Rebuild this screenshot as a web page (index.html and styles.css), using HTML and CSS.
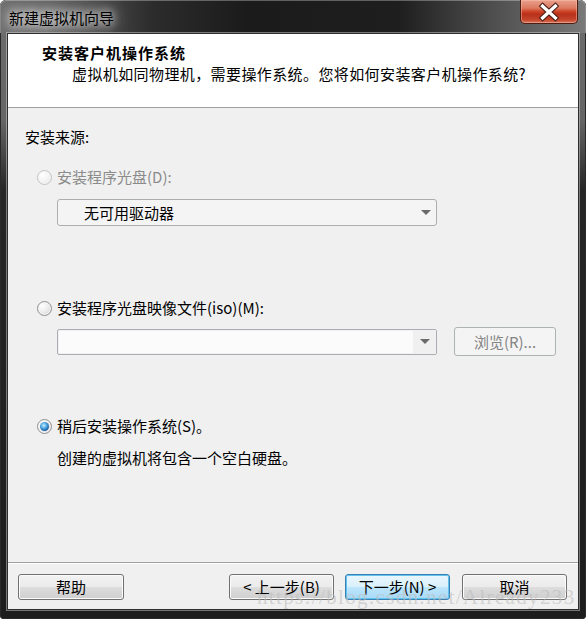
FILE: index.html
```html
<!DOCTYPE html>
<html lang="zh-CN">
<head>
<meta charset="utf-8">
<title>新建虚拟机向导</title>
<link rel="stylesheet" href="styles.css">
</head>
<body>
<div class="window">
  <div class="titlebar">
    <span class="title">新建虚拟机向导</span>
    <div class="close">
      <svg width="58" height="24" viewBox="0 0 58 24">
        <path d="M23 6 L36 18 M36 6 L23 18" stroke="#4a2017" stroke-width="5.5" stroke-linecap="square" fill="none"/>
        <path d="M23 6 L36 18 M36 6 L23 18" stroke="#ffffff" stroke-width="3.4" stroke-linecap="square" fill="none"/>
      </svg>
    </div>
  </div>
  <div class="client">
    <div class="header">
      <div class="h-title">安装客户机操作系统</div>
      <div class="h-sub">虚拟机如同物理机，需要操作系统。您将如何安装客户机操作系统?</div>
    </div>
    <div class="body">
      <div class="label">安装来源:</div>
      <div class="radio-row r1 is-disabled"><span class="radio"></span><span>安装程序光盘(D):</span></div>
      <div class="select"><span>无可用驱动器</span><span class="arrow"></span></div>
      <div class="radio-row r2"><span class="radio"></span><span>安装程序光盘映像文件(iso)(M):</span></div>
      <div class="iso-row">
        <div class="combo"><div class="field"></div><div class="combo-btn"><span class="arrow"></span></div></div>
        <button class="browse">浏览(R)...</button>
      </div>
      <div class="radio-row r3"><span class="radio checked"></span><span>稍后安装操作系统(S)。</span></div>
      <div class="desc">创建的虚拟机将包含一个空白硬盘。</div>
    </div>
    <div class="footer">
      <button class="btn help">帮助</button>
      <button class="btn back">&lt; 上一步(B)</button>
      <button class="btn next">下一步(N) &gt;</button>
      <button class="btn cancel">取消</button>
    </div>
  </div>
  <div class="watermark">https://blog.csdn.net/Already233</div>
</div>
</body>
</html>
```
FILE: styles.css
```css
html, body {
  margin: 0;
  padding: 0;
  background: #ffffff;
}

.window {
  position: relative;
  width: 586px;
  height: 619px;
  box-sizing: border-box;
  display: flex;
  flex-direction: column;
  padding-bottom: 9px;
  border-radius: 6px 6px 4px 4px;
  background: linear-gradient(to bottom, #6c6c6c 0, #666666 120px, #262626 190px, #1d1d1d 100%);
  box-shadow: inset 0 0 0 1px #2a2a2a;
  font-family: "Noto Sans CJK SC", "Noto Sans", sans-serif;
  font-size: 15px;
  color: #000;
  overflow: hidden;
}

.titlebar {
  height: 33px;
  flex: none;
  display: flex;
  align-items: flex-start;
  border-radius: 6px 6px 0 0;
  background: linear-gradient(to right, #6e6e6e 0, #5e5e5e 10%, #2c2c2c 26%, #1b1b1b 42%, #1e1e1e 68%, #4e4e4e 84%, #7a7a7a 100%);
  box-shadow: inset 0 1px rgba(255, 255, 255, 0.3), inset 1px 0 rgba(255,255,255,0.15), inset -1px 0 rgba(255,255,255,0.15);
}

.title {
  margin: 8px 0 0 9px;
  line-height: 20px;
  font-size: 15px;
  color: #000;
  text-shadow: 0 0 8px rgba(255, 255, 255, 0.95), 0 0 14px rgba(255, 255, 255, 0.8), 0 0 22px rgba(255, 255, 255, 0.6);
}

.close {
  margin-left: auto;
  margin-right: 8px;
  width: 58px;
  height: 24px;
  box-sizing: border-box;
  border: 1px solid #4d1d14;
  border-top: none;
  border-radius: 0 0 5px 5px;
  background: linear-gradient(to bottom, #e8a08c 0, #dc7a60 35%, #cc4328 50%, #b9301a 62%, #c4442a 85%, #d8765c 100%);
  box-shadow: inset 0 0 0 1px rgba(255, 200, 180, 0.45);
  display: flex;
}

.close svg {
  display: block;
  margin: 0 0 0 -1px;
}

.client {
  flex: 1;
  margin: 0 7px;
  border: 1px solid #2e2e2e;
  box-shadow: 0 0 0 1px rgba(210, 210, 210, 0.5);
  background: #f0f0f0;
  display: flex;
  flex-direction: column;
}

.header {
  height: 74px;
  box-sizing: border-box;
  flex: none;
  background: #ffffff;
  border-bottom: 1px solid #a0a0a0;
  padding: 9px 0 0 34px;
}

.h-title {
  font-weight: bold;
  line-height: 20px;
  letter-spacing: 1px;
}

.h-sub {
  margin: 1px 0 0 30px;
  line-height: 20px;
  letter-spacing: 0.4px;
}

.body {
  flex: 1;
  display: flex;
  flex-direction: column;
  align-items: flex-start;
  padding: 19px 0 0 17px;
}

.label {
  line-height: 20px;
}

.radio-row {
  display: flex;
  align-items: center;
  gap: 5px;
  height: 20px;
  line-height: 20px;
  margin-left: 12px;
}

.r1 { margin-top: 20px; }
.r2 { margin-top: 72px; }
.r3 { margin-top: 60px; }

.is-disabled {
  color: #8b8b8b;
}

.radio {
  position: relative;
  flex: none;
  width: 15px;
  height: 15px;
  box-sizing: border-box;
  border-radius: 50%;
  border: 1px solid #8e9091;
  background: radial-gradient(circle at 32% 30%, #ffffff 0, #eeeeee 45%, #cdcfd0 100%);
  box-shadow: inset 0 0 0 1px #f7f7f7;
}

.is-disabled .radio {
  border-color: #c2c3c4;
  background: radial-gradient(circle at 32% 30%, #ffffff 0, #f4f4f4 50%, #e2e2e2 100%);
}

.radio.checked::after {
  content: "";
  position: absolute;
  left: 2px;
  top: 2px;
  width: 9px;
  height: 9px;
  border-radius: 50%;
  background: radial-gradient(circle at 42% 38%, #c6ecfd 0, #58aee4 35%, #1c63aa 68%, #0e3f78 100%);
}

.select {
  margin: 12px 0 0 32px;
  width: 380px;
  height: 27px;
  box-sizing: border-box;
  border: 1px solid #adadad;
  border-radius: 3px;
  background: #f4f4f4;
  display: flex;
  align-items: center;
  justify-content: space-between;
  padding: 0 5px 0 26px;
  line-height: 20px;
}

.arrow {
  width: 0;
  height: 0;
  border-left: 5px solid transparent;
  border-right: 5px solid transparent;
  border-top: 5px solid #6a6a6a;
}

.iso-row {
  margin: 9px 0 0 32px;
  display: flex;
  align-items: center;
}

.combo {
  width: 380px;
  height: 26px;
  box-sizing: border-box;
  border: 1px solid #abadb3;
  border-radius: 2px;
  background: #f0f0f0;
  display: flex;
}

.field {
  flex: 1;
  margin: 1px 0 1px 1px;
  background: #fbfbfb;
}

.combo-btn {
  width: 23px;
  display: flex;
  align-items: center;
  justify-content: center;
  background: #f0f0f0;
}

.browse {
  margin-left: 17px;
  width: 102px;
  height: 29px;
  box-sizing: border-box;
  border: 1px solid #adb2b5;
  border-radius: 3px;
  background: #f4f4f4;
  color: #838383;
  font: inherit;
  font-size: 15px;
  line-height: 20px;
  padding: 0;
}

.desc {
  margin: 12px 0 0 32px;
  line-height: 20px;
}

.footer {
  height: 47px;
  box-sizing: border-box;
  flex: none;
  border-top: 1px solid #a0a0a0;
  box-shadow: inset 0 1px #ffffff;
  display: flex;
  align-items: flex-start;
  padding: 11px 11px 0 10px;
}

.btn {
  width: 105px;
  height: 26px;
  box-sizing: border-box;
  border: 1px solid #707070;
  border-radius: 3px;
  background: linear-gradient(to bottom, #f2f2f2 0, #ebebeb 50%, #dddddd 51%, #cfcfcf 100%);
  box-shadow: inset 0 0 0 1px #fcfcfc;
  font: inherit;
  font-size: 15px;
  line-height: 20px;
  color: #000;
  padding: 0;
}

.help { width: 106px; }
.back { margin-left: auto; }
.next {
  margin-left: 11px;
  border-color: #3c7fb1;
  background: linear-gradient(to bottom, #eaf6fd 0, #d9f0fc 50%, #bee6fd 51%, #a7d9f5 100%);
  box-shadow: inset 0 0 0 1px #5fc4f2;
}
.cancel { margin-left: 12px; }

.watermark {
  position: absolute;
  left: 257px;
  top: 587px;
  font-family: "Liberation Serif", serif;
  font-size: 21px;
  line-height: 21px;
  letter-spacing: 1.35px;
  color: rgba(190, 190, 190, 0.6);
  white-space: nowrap;
  pointer-events: none;
}
```
